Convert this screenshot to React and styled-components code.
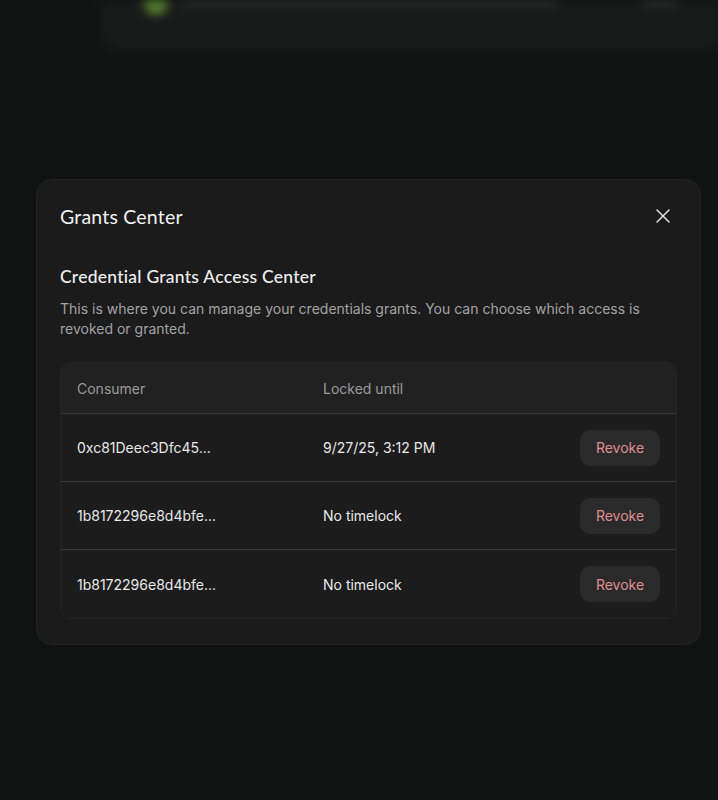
import React from "react";
import styled, { createGlobalStyle } from "styled-components";
import { X } from "lucide-react";

const GlobalStyle = createGlobalStyle`
  html, body {
    margin: 0;
    padding: 0;
    background: #111212;
    font-family: Inter, "Noto Sans", sans-serif;
    color: #ececec;
  }
  * { box-sizing: border-box; }
`;

const Page = styled.div`
  position: relative;
  width: 718px;
  height: 800px;
  overflow: hidden;
  background: #111212;
`;

// blurred page content behind the dialog
const Backdrop = styled.div`
  padding-left: 100px;
  filter: blur(5px);
  opacity: 0.9;
`;

const BgCard = styled.div`
  height: 50px;
  background: #1a1b1b;
  border-bottom-left-radius: 14px;
  display: flex;
  align-items: flex-start;
  gap: 14px;
  padding: 0 40px 0 44px;
  overflow: hidden;
`;

const BgDot = styled.div`
  width: 24px;
  height: 24px;
  border-radius: 50%;
  background: #5d8a32;
  margin-top: -9px;
  flex: none;
`;

const BgLine = styled.div`
  height: 8px;
  width: ${(p) => p.w}px;
  margin-top: -1px;
  margin-left: ${(p) => p.ml || 0}px;
  border-radius: 4px;
  background: #2c2d2d;
`;

const Overlay = styled.div`
  position: absolute;
  inset: 0;
  padding: 179px 0 0 36px;
`;

const Dialog = styled.div`
  width: 665px;
  background: #1b1b1c;
  border: 1px solid #242425;
  border-radius: 16px;
  padding: 21px 23px 25px;
`;

const Header = styled.div`
  display: flex;
  align-items: center;
  justify-content: space-between;
  height: 30px;
`;

const Title = styled.h2`
  margin: 0;
  font-family: Lato, "Noto Sans", sans-serif;
  font-weight: 400;
  font-size: 19.5px;
  color: #f2f2f2;
  letter-spacing: 0.2px;
`;

const CloseButton = styled.button`
  background: none;
  border: none;
  padding: 0;
  margin-right: 2px;
  color: #e8e8e8;
  display: flex;
  cursor: pointer;
`;

const SubTitle = styled.h3`
  margin: 35px 0 0;
  font-family: Lato, "Noto Sans", sans-serif;
  font-weight: 500;
  font-size: 17.5px;
  letter-spacing: 0.25px;
  color: #f0f0f0;
  line-height: 22px;
`;

const Description = styled.p`
  margin: 11px 0 0;
  font-size: 14px;
  line-height: 20px;
  color: #a3a3a3;
`;

const Table = styled.div`
  margin-top: 23px;
  border: 1px solid #262627;
  border-radius: 10px;
  overflow: hidden;
`;

const Row = styled.div`
  display: grid;
  grid-template-columns: 246px 1fr auto;
  align-items: center;
  padding: 0 16px;
  height: ${(p) => (p.head ? 50 : 68)}px;
  background: ${(p) => (p.head ? "#212122" : "#1c1c1d")};
  font-size: 14px;
  color: ${(p) => (p.head ? "#9b9b9b" : "#e8e8e8")};
  & + & {
    border-top: 1px solid ${(p) => (p.head ? "#262627" : "#39393a")};
  }
  &:last-child {
    height: 69px;
  }
`;

const Cell = styled.div`
  white-space: nowrap;
`;

const RevokeButton = styled.button`
  width: 80px;
  height: 36px;
  border: none;
  border-radius: 10px;
  background: #2a2a2b;
  color: #e08e8e;
  font-family: Inter, "Noto Sans", sans-serif;
  font-size: 14px;
  cursor: pointer;
`;

const grants = [
  { consumer: "0xc81Deec3Dfc45...", lock: "9/27/25, 3:12 PM" },
  { consumer: "1b8172296e8d4bfe...", lock: "No timelock" },
  { consumer: "1b8172296e8d4bfe...", lock: "No timelock" },
];

export default function App() {
  return (
    <Page>
      <GlobalStyle />
      <Backdrop>
        <BgCard>
          <BgDot />
          <BgLine w={380} />
          <BgLine w={36} ml={70} />
        </BgCard>
      </Backdrop>
      <Overlay>
        <Dialog>
          <Header>
            <Title>Grants Center</Title>
            <CloseButton aria-label="Close">
              <X size={24} strokeWidth={1.4} />
            </CloseButton>
          </Header>
          <SubTitle>Credential Grants Access Center</SubTitle>
          <Description>
            This is where you can manage your credentials grants. You can choose
            which access is revoked or granted.
          </Description>
          <Table>
            <Row head>
              <Cell>Consumer</Cell>
              <Cell>Locked until</Cell>
              <Cell />
            </Row>
            {grants.map((g, i) => (
              <Row key={i}>
                <Cell>{g.consumer}</Cell>
                <Cell>{g.lock}</Cell>
                <RevokeButton>Revoke</RevokeButton>
              </Row>
            ))}
          </Table>
        </Dialog>
      </Overlay>
    </Page>
  );
}
